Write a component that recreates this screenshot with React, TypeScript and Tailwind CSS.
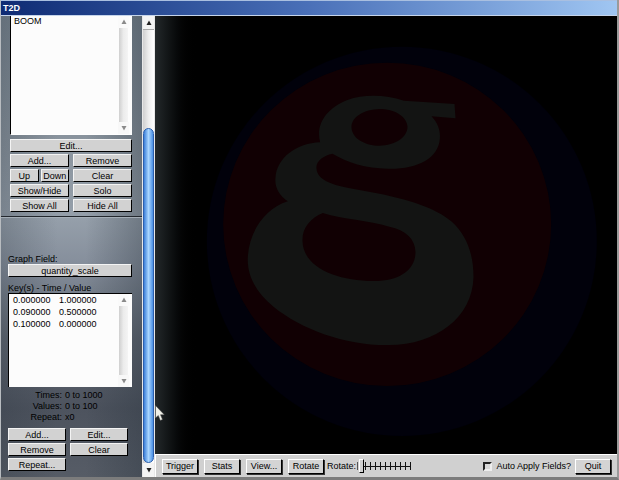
import type { ReactNode } from 'react';

interface KeyFrame {
  time: string;
  value: string;
}

const EFFECTS = ['BOOM'];

const KEYS: KeyFrame[] = [
  { time: '0.000000', value: '1.000000' },
  { time: '0.090000', value: '0.500000' },
  { time: '0.100000', value: '0.000000' },
];

const RANGES = [
  { label: 'Times:', value: '0 to 1000' },
  { label: 'Values:', value: '0 to 100' },
  { label: 'Repeat:', value: 'x0' },
];

interface ButtonProps {
  children: ReactNode;
  className?: string;
}

function PanelButton({ children, className = '' }: ButtonProps) {
  return (
    <button
      type="button"
      className={`flex h-[13px] items-center justify-center border border-t-[#f4f4f4] border-l-[#f4f4f4] border-r-black border-b-black bg-[#d2d2d2] whitespace-nowrap ${className}`}
    >
      {children}
    </button>
  );
}

function ToolButton({ children, className = '' }: ButtonProps) {
  return (
    <button
      type="button"
      className={`flex h-[15px] shrink-0 items-center justify-center border border-t-white border-l-white border-r-black border-b-black bg-[#d4d4d4] whitespace-nowrap shadow-[1px_1px_0_#333] ${className}`}
    >
      {children}
    </button>
  );
}

function Arrow({ down = false, className = '' }: { down?: boolean; className?: string }) {
  return (
    <svg viewBox="0 0 6 6" className={`h-[6px] w-[6px] ${className}`} aria-hidden="true">
      <path d={down ? 'M0.5 1h5L3 5.500z' : 'M0.5 5h5L3 0.500z'} fill="currentColor" />
    </svg>
  );
}

function ListScrollbar() {
  return (
    <div className="flex w-[11px] shrink-0 flex-col text-[#8a8a8a]">
      <button type="button" aria-label="Scroll up" className="flex h-[12px] items-center justify-center bg-[#fafafa]">
        <Arrow />
      </button>
      <div className="mx-px flex-1 bg-linear-to-r from-[#cfcfcf] via-[#ececec] to-[#f4f4f4]" />
      <button type="button" aria-label="Scroll down" className="flex h-[12px] items-center justify-center bg-[#f8f8f8]">
        <Arrow down />
      </button>
    </div>
  );
}

function Sidebar() {
  return (
    <aside className="flex w-[141px] shrink-0 flex-col bg-[linear-gradient(90deg,rgba(40,50,60,0.25),rgba(40,50,60,0)_40%,rgba(40,50,60,0)_60%,rgba(40,50,60,0.35)),linear-gradient(180deg,#78848f_0%,#8a949e_28%,#959faa_44%,#858e9b_54%,#5f6671_70%,#4d535e_85%,#565c66_100%)]">
      <section className="flex flex-col border-b border-[#23282e] pr-[10px] pb-1 pl-[9px]">
        <div className="mb-1 flex h-[119px] border-b border-l border-b-white border-l-black bg-[#fcfcfc] pr-[3px]">
          <ul className="flex-1 pl-[3px] leading-[10px]" aria-label="Effects">
            {EFFECTS.map((name) => (
              <li key={name}>{name}</li>
            ))}
          </ul>
          <ListScrollbar />
        </div>
        <div className="flex flex-col gap-[2px]">
          <PanelButton>Edit...</PanelButton>
          <div className="grid grid-cols-2 gap-x-1 gap-y-[2px]">
            <PanelButton>Add...</PanelButton>
            <PanelButton>Remove</PanelButton>
            <div className="grid grid-cols-2 gap-[2px]">
              <PanelButton>Up</PanelButton>
              <PanelButton>Down</PanelButton>
            </div>
            <PanelButton>Clear</PanelButton>
            <PanelButton>Show/Hide</PanelButton>
            <PanelButton>Solo</PanelButton>
            <PanelButton>Show All</PanelButton>
            <PanelButton>Hide All</PanelButton>
          </div>
        </div>
      </section>

      <section className="flex flex-1 flex-col border-t border-[#a4adb6] pt-9 pr-[10px] pl-[7px]">
        <span className="leading-[10px]">Graph Field:</span>
        <PanelButton>quantity_scale</PanelButton>
        <span id="keys" className="mt-[6px] leading-[10px]">Key(s) - Time / Value</span>
        <div className="flex h-[94px] border-t border-l border-black bg-[#fcfcfc] pr-[3px]">
          <div className="flex-1 pl-1">
            <table aria-labelledby="keys" className="leading-[12px]">
              <tbody>
                {KEYS.map((key) => (
                  <tr key={key.time}>
                    <td className="w-[46px] min-w-[46px] p-0">{key.time}</td>
                    <td className="p-0">{key.value}</td>
                  </tr>
                ))}
              </tbody>
            </table>
          </div>
          <ListScrollbar />
        </div>
        <dl className="mt-[3px] grid grid-cols-[54px_1fr] gap-x-[3px] leading-[11px]">
          {RANGES.map((range) => (
            <div key={range.label} className="contents">
              <dt className="text-right">{range.label}</dt>
              <dd>{range.value}</dd>
            </div>
          ))}
        </dl>
        <div className="mt-[5px] mr-1 grid grid-cols-2 gap-x-1 gap-y-[2px]">
          <PanelButton>Add...</PanelButton>
          <PanelButton>Edit...</PanelButton>
          <PanelButton>Remove</PanelButton>
          <PanelButton>Clear</PanelButton>
          <PanelButton>Repeat...</PanelButton>
        </div>
      </section>
    </aside>
  );
}

function MainScrollbar() {
  return (
    <div className="flex w-[13px] shrink-0 flex-col border-x border-[#e8e8e8] bg-linear-to-r from-[#d0d0d0] via-[#ededed] to-white text-[#222]">
      <button type="button" aria-label="Scroll panel up" className="flex h-[14px] items-center justify-center border-b border-[#aaa] bg-[#f4f4f4]">
        <Arrow />
      </button>
      <div className="flex flex-1 flex-col">
        <div className="flex-1" />
        <div className="h-3/4 min-h-[335px] rounded-full border border-[#2b5fae] bg-linear-to-r from-[#3c7fd8] via-[#a9d6ff] to-[#4a8fe4]" />
      </div>
      <button type="button" aria-label="Scroll panel down" className="flex h-[14px] items-center justify-center bg-[#f4f4f4]">
        <Arrow down />
      </button>
    </div>
  );
}

function Viewport() {
  return (
    <div className="min-h-0 flex-1 bg-linear-to-r from-[#24292b] to-black to-[44px]">
      <svg viewBox="-132 -42 1383 1314" className="h-full w-full" role="img" aria-label="Logo">
        <ellipse cx="607" cy="634" rx="585" ry="584" fill="#01010b" />
        <ellipse cx="563" cy="583" rx="492" ry="485" fill="#110003" />
        {/* Emblem body with its two counters cut out */}
        <path
          fill="#131413"
          fillRule="evenodd"
          d="M765 222L768 265L696 259C716 281 723 302 721 326C717 385 653 418 565 416C500 415 442 397 399 371C370 377 348 394 351 416C354 448 391 462 447 474L540 491C620 508 708 532 757 575C801 615 822 671 822 741C819 862 710 945 568 945C442 947 307 899 222 830C169 786 142 737 145 681C149 604 196 536 265 514C239 496 225 472 228 443C232 383 292 339 362 337C347 281 384 233 444 210C494 192 558 194 613 212ZM540 237C492 238 454 263 456 293C458 325 496 347 540 347C588 346 624 321 624 290C622 259 585 237 540 237ZM370 549C332 565 307 594 309 634C311 713 414 753 521 753C598 754 648 721 648 666C647 625 618 601 570 590C506 571 432 568 370 549Z"
        />
      </svg>
    </div>
  );
}

function Toolbar() {
  return (
    <div className="flex h-[23px] shrink-0 items-center gap-[3px] border-t border-l border-white bg-[#d0d0d0] px-[6px]">
      <div className="flex gap-[6px]">
        <ToolButton className="w-9">Trigger</ToolButton>
        <ToolButton className="w-9">Stats</ToolButton>
        <ToolButton className="w-9">View...</ToolButton>
        <ToolButton className="w-9">Rotate</ToolButton>
      </div>
      <div className="flex items-center gap-px">
        <label htmlFor="rotate">Rotate:</label>
        <input
          id="rotate"
          type="range"
          min="0"
          max="100"
          defaultValue="4"
          className="h-[14px] w-[54px] appearance-none bg-[linear-gradient(#111,#111),linear-gradient(#555,#555),repeating-linear-gradient(90deg,transparent_0_3px,#111_3px_4px,transparent_4px_5px)] bg-[length:48px_1px,1px_8px,100%_8px] bg-[position:right_center,left_center,left_center] bg-no-repeat [&::-webkit-slider-thumb]:h-[14px] [&::-webkit-slider-thumb]:w-[5px] [&::-webkit-slider-thumb]:appearance-none [&::-webkit-slider-thumb]:border [&::-webkit-slider-thumb]:border-t-white [&::-webkit-slider-thumb]:border-r-black [&::-webkit-slider-thumb]:border-b-black [&::-webkit-slider-thumb]:border-l-white [&::-webkit-slider-thumb]:bg-[#d0d0d0]"
        />
      </div>
      <div className="ml-auto flex items-center gap-1">
        <input
          id="auto-apply"
          type="checkbox"
          className="h-[9px] w-[9px] appearance-none border-2 border-t-[#222] border-r-[#eee] border-b-[#eee] border-l-[#222] bg-[#d8d8d8]"
        />
        <label htmlFor="auto-apply" className="whitespace-nowrap">Auto Apply Fields?</label>
        <ToolButton className="w-9">Quit</ToolButton>
      </div>
    </div>
  );
}

export default function App() {
  return (
    <div className="relative flex h-screen min-h-[480px] flex-col border-r-2 border-b-[3px] border-l border-r-[#9a9a9a] border-b-[#7c7c7c] border-l-[#b8bcc0] bg-black font-['Liberation_Sans',sans-serif] text-[9px] leading-[10px] text-black">
      <header className="flex h-4 shrink-0 items-center border-y border-t-[#a9bfe0] border-b-[#c5d4ea] bg-linear-to-r from-[#0f2b74] via-[#4a70b8] to-[#a0c6f2] pl-[2px]">
        <h1 className="font-bold text-white">T2D</h1>
      </header>
      <div className="flex min-h-0 flex-1">
        <Sidebar />
        <MainScrollbar />
        <main className="flex min-w-0 flex-1 flex-col">
          <Viewport />
          <Toolbar />
        </main>
      </div>

      {/* Mouse pointer */}
      <svg viewBox="0 0 10 16" className="absolute top-[405px] left-[154px] h-4 w-[10px]" aria-hidden="true">
        <path d="M0.5 0.5V13L3.300 10.500L5.300 15.500L7.500 14.500L5.500 9.700H9.300Z" fill="#f0f0e8" stroke="#444" strokeWidth="0.5" />
      </svg>
    </div>
  );
}
